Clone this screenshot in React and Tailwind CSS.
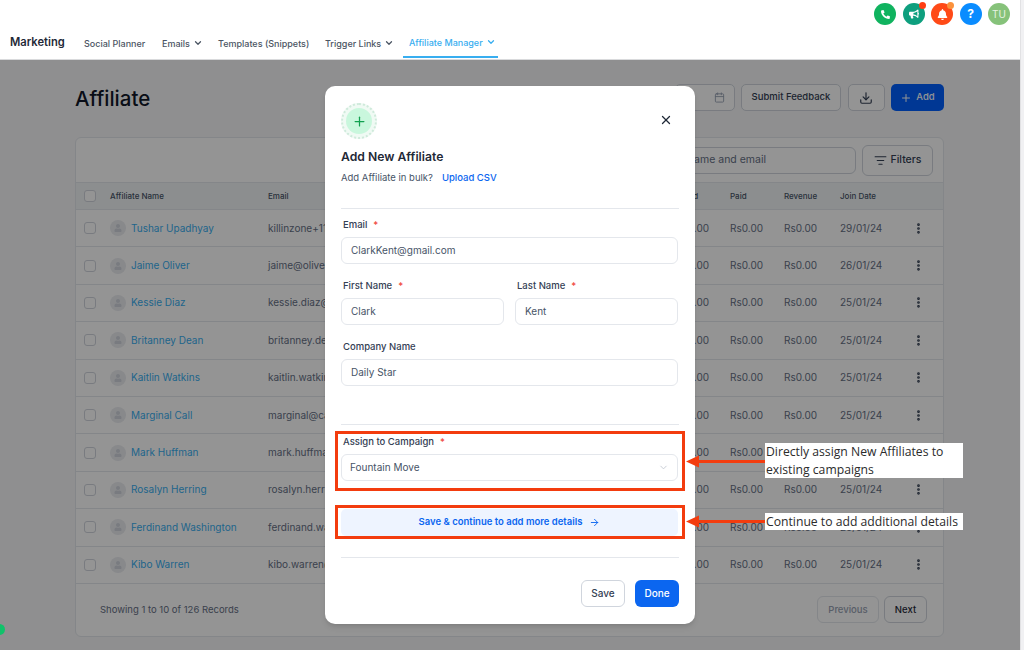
import React from "react";
import { FaPhoneAlt, FaBullhorn, FaBell, FaUser } from "react-icons/fa";
import {
  ArrowRight,
  Calendar,
  ChevronDown,
  Download,
  EllipsisVertical,
  ListFilter,
  Plus,
  X,
} from "lucide-react";

const affiliates = [
  ["Tushar Upadhyay", "killinzone+11@gmail.com", "29/01/24"],
  ["Jaime Oliver", "jaime@oliver.com", "26/01/24"],
  ["Kessie Diaz", "kessie.diaz@gmail.com", "25/01/24"],
  ["Britanney Dean", "britanney.dean@gmail.com", "25/01/24"],
  ["Kaitlin Watkins", "kaitlin.watkins@gmail.com", "25/01/24"],
  ["Marginal Call", "marginal@call.com", "25/01/24"],
  ["Mark Huffman", "mark.huffman@gmail.com", "25/01/24"],
  ["Rosalyn Herring", "rosalyn.herring@gmail.com", "25/01/24"],
  ["Ferdinand Washington", "ferdinand.washington@gmail.com", "25/01/24"],
  ["Kibo Warren", "kibo.warren@gmail.com", "25/01/24"],
];

const rowGrid = "grid grid-cols-[34px_158px_408px_54px_54px_56px_72px_24px] items-center";

const Checkbox = () => (
  <span className="ml-[8px] block w-[12px] h-[12px] rounded-[3px] border border-[#d0d5dd] bg-white" />
);

const Field = ({ label, value, required }) => (
  <div className="flex-1">
    <div className="ml-[2px] h-[13px] flex items-center text-[9.5px] text-[#344054] font-medium">
      {label}
      {required && <span className="ml-[6px] text-[#f04438]">*</span>}
    </div>
    <div className="mt-[5px] h-[27px] px-[9px] flex items-center rounded-[6px] border border-[#e4e7ec] bg-white text-[10px] text-[#475467]">
      {value}
    </div>
  </div>
);

const Arrow = ({ className }) => (
  <svg className={className} width="80" height="13" viewBox="0 0 80 13">
    <path d="M0 6.5 L13 0.5 L13 5 L80 5 L80 8 L13 8 L13 12.5 Z" fill="#f33c0e" />
  </svg>
);

const TopIcon = ({ color, dot, children }) => (
  <span className={`relative w-[22px] h-[22px] rounded-full flex items-center justify-center text-white ${color}`}>
    {children}
    {dot && <span className={`absolute top-[-1px] right-[-1px] w-[7px] h-[7px] rounded-full ${dot}`} />}
  </span>
);

const App = () => {
  return (
    <div className="relative w-[1024px] h-[650px] overflow-hidden flex bg-white font-['Inter',sans-serif]">
      <div className="relative w-[1020px] h-[650px] flex flex-col">
        <header className="h-[60px] bg-white border-b border-[#d9dadc] relative z-0">
          <div className="h-[28px] flex items-center justify-end gap-[6.5px] pr-[10px]">
            <TopIcon color="bg-[#10b35f]"><FaPhoneAlt size={9} /></TopIcon>
            <TopIcon color="bg-[#0e9f7e]" dot="bg-[#ff3d12]"><FaBullhorn size={10} /></TopIcon>
            <TopIcon color="bg-[#ff4a17]" dot="bg-[#fb923c]"><FaBell size={11} /></TopIcon>
            <TopIcon color="bg-[#0a8cff]"><span className="text-[12px] font-bold">?</span></TopIcon>
            <TopIcon color="bg-[#86c27a]"><span className="text-[10px] text-[#e6f3e2]">TU</span></TopIcon>
          </div>
          <nav className="h-[31px] flex items-stretch pl-[10px] text-[9px] font-medium text-[#4b5563] whitespace-nowrap">
            <span className="w-[74px] pt-[6px] text-[11.2px] font-semibold text-[#1f2937]">Marketing</span>
            <span className="w-[78px] pt-[9px]">Social Planner</span>
            <span className="w-[56px] pt-[9px] flex items-start gap-[3px]">
              Emails <ChevronDown size={10} strokeWidth={3} className="mt-[1px] shrink-0" />
            </span>
            <span className="w-[107px] pt-[9px]">Templates (Snippets)</span>
            <span className="w-[78px] pt-[9px] flex items-start gap-[3px]">
              Trigger Links <ChevronDown size={10} strokeWidth={3} className="mt-[1px] shrink-0" />
            </span>
            <span className="w-[95px] h-[30px] pt-[8px] pl-[6px] flex items-start gap-[3px] text-[#38aef0] border-b-2 border-[#38aef0]">
              Affiliate Manager <ChevronDown size={10} strokeWidth={3} className="mt-[1px] shrink-0" />
            </span>
          </nav>
        </header>

        <main className="flex-1 bg-[#f6f7f8] pl-[75px] pr-[76px] pt-[24px]">
          <div className="h-[27px] flex items-center">
            <h1 className="mt-[4px] text-[20.5px] font-medium text-[#101828]">Affiliate</h1>
            <div className="ml-auto flex items-center gap-[6.5px]">
              <span className="w-[60px] h-[27px] rounded-[5px] border border-[#d0d5dd] bg-white flex items-center justify-end pr-[9px] text-[#98a2b3]">
                <Calendar size={11} />
              </span>
              <span className="w-[100px] h-[27px] rounded-[5px] border border-[#d0d5dd] bg-white flex items-center justify-center text-[9.5px] font-medium text-[#344054]">
                Submit Feedback
              </span>
              <span className="w-[37px] h-[27px] rounded-[5px] border border-[#d0d5dd] bg-white flex items-center justify-center text-[#344054]">
                <Download size={14} />
              </span>
              <span className="w-[53px] h-[27px] rounded-[5px] bg-[#0060ff] flex items-center justify-center gap-[4px] text-[9.5px] font-medium text-white">
                <Plus size={12} /> Add
              </span>
            </div>
          </div>

          <section className="mt-[26px] h-[500px] rounded-[6px] border border-[#e4e7ec] bg-white flex flex-col">
            <div className="h-[44px] flex items-center justify-end pr-[10px] gap-[6px]">
              <span className="w-[232px] h-[27px] rounded-[6px] border border-[#d0d5dd] px-[10px] flex items-center text-[10.5px] text-[#667085] whitespace-nowrap">
                Search by name and email
              </span>
              <span className="w-[71px] h-[31px] rounded-[6px] border border-[#d0d5dd] flex items-center justify-center gap-[4px] text-[10.5px] font-medium text-[#344054]">
                <ListFilter size={13} /> Filters
              </span>
            </div>
            <div className={`${rowGrid} h-[28px] bg-[#f2f4f7] border-y border-[#e4e7ec] text-[8px] font-medium text-[#475467]`}>
              <Checkbox />
              <span>Affiliate Name</span>
              <span>Email</span>
              <span>Owed</span>
              <span>Paid</span>
              <span>Revenue</span>
              <span>Join Date</span>
              <span />
            </div>
            {affiliates.map(([name, email, date]) => (
              <div key={name} className={`${rowGrid} h-[37.4px] border-b border-[#e4e7ec] text-[10px] text-[#667085]`}>
                <Checkbox />
                <span className="flex items-center gap-[5px] text-[#38aef0] whitespace-nowrap">
                  <span className="w-[16px] h-[16px] rounded-full bg-[#eaecf0] flex items-center justify-center text-[#d0d5dd]">
                    <FaUser size={8} />
                  </span>
                  {name}
                </span>
                <span>{email}</span>
                <span>Rs0.00</span>
                <span>Rs0.00</span>
                <span>Rs0.00</span>
                <span>{date}</span>
                <EllipsisVertical size={13} strokeWidth={3} className="text-[#344054]" />
              </div>
            ))}
            <div className="flex-1 flex items-center pl-[24px] pr-[16px] text-[9.5px] text-[#667085]">
              Showing 1 to 10 of 126 Records
              <div className="ml-auto flex gap-[5px] font-medium">
                <span className="w-[62px] h-[27px] rounded-[6px] border border-[#e4e7ec] flex items-center justify-center text-[#98a2b3]">Previous</span>
                <span className="w-[43px] h-[27px] rounded-[6px] border border-[#d0d5dd] flex items-center justify-center text-[#1f2937]">Next</span>
              </div>
            </div>
          </section>
        </main>

        {/* dim layer under the modal, header stays bright */}
        <div className="absolute inset-x-0 top-[60px] bottom-0 bg-black/42" />
        <span className="absolute left-[-6px] top-[624px] w-[11px] h-[11px] rounded-full bg-[#10c26a]" />

        <div className="absolute left-[325px] top-[86px] w-[370px] h-[538px] rounded-[10px] bg-white shadow-md px-[16px] pt-[17px]">
          <div className="flex items-start justify-between">
            <span className="w-[36px] h-[36px] rounded-full border-2 border-dotted border-[#cfeadb] bg-[#f0faf4] flex items-center justify-center">
              <span className="w-[26px] h-[26px] rounded-full bg-[#c9f7dd] flex items-center justify-center text-[#12a150]">
                <Plus size={15} />
              </span>
            </span>
            <X size={14} strokeWidth={2.2} className="mt-[10px] mr-[6px] text-[#1f2937]" />
          </div>
          <h2 className="mt-[9px] h-[18px] text-[12.2px] leading-[18px] font-semibold text-[#1f2937]">Add New Affiliate</h2>
          <p className="mt-[5px] text-[9.5px] leading-[14px] text-[#475467]">
            Add Affiliate in bulk?
            <span className="ml-[9px] font-medium text-[#0b66f0]">Upload CSV</span>
          </p>
          <div className="mt-[23px] border-t border-[#e4e7ec]" />

          <div className="mt-[10px] w-[337px] flex flex-col gap-[16px]">
            <Field label="Email" value="ClarkKent@gmail.com" required />
            <div className="flex gap-[11px]">
              <Field label="First Name" value="Clark" required />
              <Field label="Last Name" value="Kent" required />
            </div>
            <Field label="Company Name" value="Daily Star" />
          </div>

          <div className="mt-[38px] border-t border-[#e4e7ec]" />
          <div className="mt-[11px] w-[337px]">
            <div className="ml-[2px] h-[13px] flex items-center text-[9.5px] text-[#344054] font-medium">
              Assign to Campaign <span className="ml-[6px] text-[#f04438]">*</span>
            </div>
            <div className="mt-[5px] h-[27px] px-[8px] flex items-center justify-between rounded-[6px] border border-[#e4e7ec] text-[10px] text-[#475467]">
              Fountain Move
              <ChevronDown size={11} className="text-[#c4c9d2]" />
            </div>
          </div>
          <div className="mt-[28px] w-[337px] h-[27px] rounded-[5px] bg-[#eef4ff] flex items-center justify-center gap-[7px] text-[9.5px] font-semibold text-[#0b66f0]">
            Save & continue to add more details
            <ArrowRight size={11} />
          </div>
          <div className="mt-[21px] border-t border-[#e4e7ec]" />
          <div className="mt-[22px] flex justify-end gap-[10px] w-[338px] text-[10px] font-medium">
            <span className="w-[44px] h-[27px] rounded-[6px] border border-[#d0d5dd] flex items-center justify-center text-[#344054]">Save</span>
            <span className="w-[44px] h-[27px] rounded-[6px] bg-[#0b66f0] flex items-center justify-center text-white">Done</span>
          </div>
        </div>

        {/* annotations on top of the screenshot */}
        <div className="absolute left-[335px] top-[431px] w-[350px] h-[60px] border-[3px] border-[#f33c0e]" />
        <div className="absolute left-[335px] top-[505px] w-[350px] h-[34px] border-[3px] border-[#f33c0e]" />
        <Arrow className="absolute left-[686px] top-[455px]" />
        <Arrow className="absolute left-[686px] top-[515px]" />
        <div className="absolute left-[765px] top-[443px] w-[198px] h-[35px] pl-[1px] bg-white text-[12.2px] leading-[17.5px] text-[#2b2b2b] font-['Open_Sans',sans-serif]">
          Directly assign New Affiliates to existing campaigns
        </div>
        <div className="absolute left-[765px] top-[513px] w-[198px] h-[17px] pl-[1px] bg-white text-[12.2px] leading-[17px] text-[#2b2b2b] font-['Open_Sans',sans-serif]">
          Continue to add additional details
        </div>
      </div>
      <div className="w-[4px] bg-[#f1f1f3] border-l border-[#e2e2e4]" />
    </div>
  );
};

export default App;
